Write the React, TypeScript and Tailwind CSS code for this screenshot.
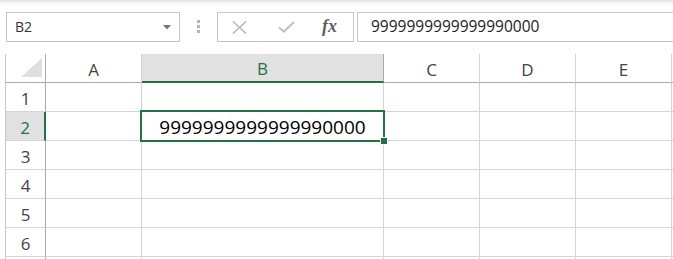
import React from "react";

const cols = [
  { key: "A", w: "w-[96px]", label: "A" },
  { key: "B", w: "w-[242px]", label: "B" },
  { key: "C", w: "w-[96px]", label: "C" },
  { key: "D", w: "w-[96px]", label: "D" },
  { key: "E", w: "w-[96px]", label: "E" },
  { key: "F", w: "w-[96px]", label: "" },
];

const rows = [1, 2, 3, 4, 5, 6, 7];

export default function App() {
  return (
    <div className="w-[673px] h-[259px] overflow-hidden bg-white relative font-['Segoe_UI','Open_Sans',sans-serif]">
      {/* Formula bar */}
      <div className="h-[54px] pt-[12px] pl-[6px] flex items-start bg-[linear-gradient(to_bottom,#e2e2e2,#f6f6f6_3px,#ffffff_7px)]">
        <div className="w-[174px] h-[30px] border border-[#c6c6c6] bg-white flex items-center justify-between pl-[8px] pr-[8px] shrink-0">
          <span className="text-[14px] text-[#333] leading-none">B2</span>
          <svg width="8" height="5" viewBox="0 0 8 5">
            <polygon points="0,0 8,0 4,4.5" fill="#777" />
          </svg>
        </div>
        <div className="ml-[17px] mt-[8px] w-[3px] flex flex-col gap-[2px] shrink-0">
          <div className="w-[3px] h-[3px] bg-[#b4b4b4]" />
          <div className="w-[3px] h-[3px] bg-[#b4b4b4]" />
          <div className="w-[3px] h-[3px] bg-[#b4b4b4]" />
        </div>
        <div className="ml-[17px] w-[137px] h-[30px] border border-[#c6c6c6] bg-white flex items-center shrink-0">
          <svg className="ml-[14px]" width="15" height="13" viewBox="0 0 15 13">
            <path d="M1 0.5 L14 12.5 M14 0.5 L1 12.5" stroke="#b9b9b9" strokeWidth="1.6" fill="none" />
          </svg>
          <svg className="ml-[31px]" width="17" height="12" viewBox="0 0 17 12">
            <path d="M1 6.5 L6 10.5 L16 1" stroke="#c2c2c2" strokeWidth="2.2" fill="none" />
          </svg>
          <span className="ml-[27px] text-[18px] leading-none italic font-bold text-[#606060] font-['Liberation_Serif',serif] -mt-[2px]">
            fx
          </span>
        </div>
        <div className="ml-[3px] w-[330px] h-[30px] border border-[#c6c6c6] bg-white flex items-center pl-[13px] shrink-0">
          <span className="text-[15.5px] text-[#222] leading-none">9999999999999990000</span>
        </div>
      </div>

      {/* Grid */}
      <div className="relative pl-[5px]">
        {/* Header row */}
        <div className="flex h-[29px]">
          <div className="w-[41px] h-[29px] border-l border-l-[#c6c6c6] border-r border-r-[#ababab] border-b border-b-[#ababab] shrink-0 flex items-end justify-end pr-[2px] pb-[4px]">
            <svg width="22" height="20" viewBox="0 0 22 20">
              <polygon points="0,19 21,0 21,19" fill="#dfdfdf" />
            </svg>
          </div>
          {cols.map((c) =>
            c.key === "B" ? (
              <div
                key={c.key}
                className={`${c.w} h-[29px] shrink-0 bg-[#e1e1e1] border-r border-r-[#ababab] border-b-2 border-b-[#217346] flex items-center justify-center pt-[3px] text-[17px] text-[#217346]`}
              >
                {c.label}
              </div>
            ) : (
              <div
                key={c.key}
                className={`${c.w} h-[29px] shrink-0 border-r border-r-[#d4d4d4] border-b border-b-[#ababab] flex items-center justify-center pt-[4px] text-[17px] text-[#444]`}
              >
                {c.label}
              </div>
            )
          )}
        </div>
        {rows.map((r) => (
          <div key={r} className="flex h-[29px]">
            {r === 2 ? (
              <div className="w-[41px] h-[29px] shrink-0 bg-[#e1e1e1] border-l border-l-[#c6c6c6] border-r-2 border-r-[#217346] border-b border-b-[#d4d4d4] flex items-center justify-center pt-[3px] text-[17px] text-[#217346]">
                {r}
              </div>
            ) : (
              <div className="w-[41px] h-[29px] shrink-0 border-l border-l-[#c6c6c6] border-r border-r-[#ababab] border-b border-b-[#d4d4d4] flex items-center justify-center pt-[3px] text-[17px] text-[#444]">
                {r < 7 ? r : ""}
              </div>
            )}
            {cols.map((c) => (
              <div
                key={c.key}
                className={`${c.w} h-[29px] shrink-0 border-r border-r-[#d4d4d4] border-b border-b-[#d4d4d4] flex items-center justify-center`}
              >
                {r === 2 && c.key === "B" ? (
                  <span className="text-[19px] text-black leading-none pt-[3px]">9999999999999990000</span>
                ) : null}
              </div>
            ))}
          </div>
        ))}

        {/* Selection overlay */}
        <div className="absolute left-[140px] top-[56px] w-[245px] h-[32px] border-2 border-[#217346] pointer-events-none" />
        <div className="absolute left-[381px] top-[84px] w-[6px] h-[6px] bg-[#217346] outline outline-1 outline-white" />
      </div>
    </div>
  );
}
